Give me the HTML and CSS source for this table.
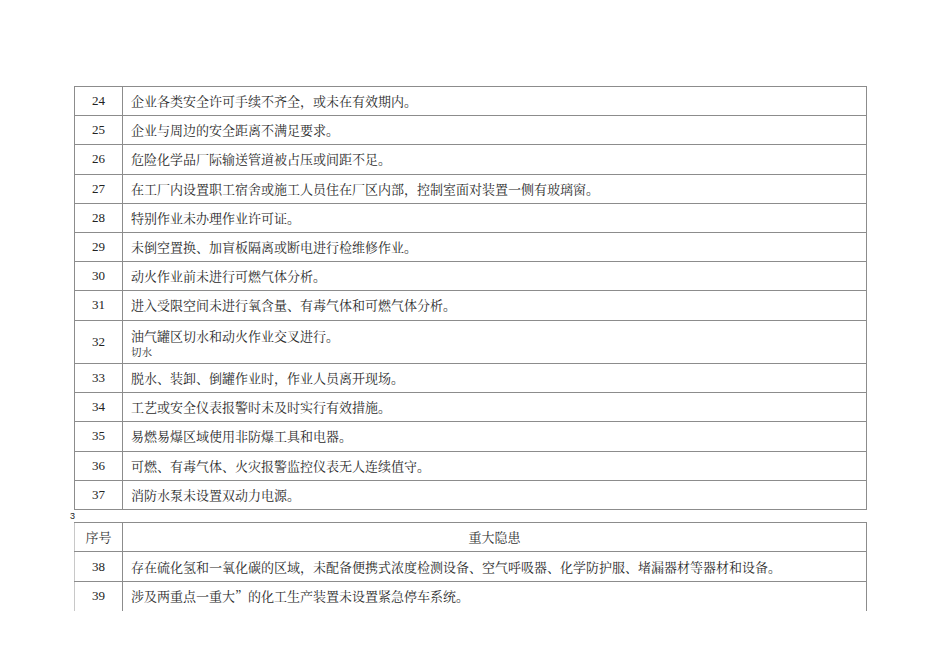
FILE: index.html
```html
<!DOCTYPE html>
<html lang="zh">
<head>
<meta charset="utf-8">
<title>重大隐患</title>
<link rel="stylesheet" href="styles.css">
</head>
<body>
<div class="page">
  <table class="grid">
    <colgroup><col class="c-no"><col class="c-text"></colgroup>
    <tr><td class="no">24</td><td class="txt">企业各类安全许可手续不齐全，或未在有效期内。</td></tr>
    <tr><td class="no">25</td><td class="txt">企业与周边的安全距离不满足要求。</td></tr>
    <tr><td class="no">26</td><td class="txt">危险化学品厂际输送管道被占压或间距不足。</td></tr>
    <tr><td class="no">27</td><td class="txt">在工厂内设置职工宿舍或施工人员住在厂区内部，控制室面对装置一侧有玻璃窗。</td></tr>
    <tr><td class="no">28</td><td class="txt">特别作业未办理作业许可证。</td></tr>
    <tr><td class="no">29</td><td class="txt">未倒空置换、加盲板隔离或断电进行检维修作业。</td></tr>
    <tr><td class="no">30</td><td class="txt">动火作业前未进行可燃气体分析。</td></tr>
    <tr><td class="no">31</td><td class="txt">进入受限空间未进行氧含量、有毒气体和可燃气体分析。</td></tr>
    <tr class="tall"><td class="no">32</td><td class="txt"><div class="main">油气罐区切水和动火作业交叉进行。</div><div class="sub">切水</div></td></tr>
    <tr><td class="no">33</td><td class="txt">脱水、装卸、倒罐作业时，作业人员离开现场。</td></tr>
    <tr><td class="no">34</td><td class="txt">工艺或安全仪表报警时未及时实行有效措施。</td></tr>
    <tr><td class="no">35</td><td class="txt">易燃易爆区域使用非防爆工具和电器。</td></tr>
    <tr><td class="no">36</td><td class="txt">可燃、有毒气体、火灾报警监控仪表无人连续值守。</td></tr>
    <tr><td class="no">37</td><td class="txt">消防水泵未设置双动力电源。</td></tr>
  </table>
  <div class="pagenum">3</div>
  <table class="grid second">
    <colgroup><col class="c-no"><col class="c-text"></colgroup>
    <tr class="head"><td class="no hd">序号</td><td class="hd center">重大隐患</td></tr>
    <tr><td class="no">38</td><td class="txt">存在硫化氢和一氧化碳的区域，未配备便携式浓度检测设备、空气呼吸器、化学防护服、堵漏器材等器材和设备。</td></tr>
    <tr class="last"><td class="no">39</td><td class="txt">涉及两重点一重大”的化工生产装置未设置紧急停车系统。</td></tr>
  </table>
</div>
</body>
</html>
```

FILE: styles.css
```css
html, body {
  margin: 0;
  padding: 0;
  background: #ffffff;
}

body {
  width: 950px;
  height: 672px;
  overflow: hidden;
  font-family: "Liberation Serif", "Noto Serif CJK SC", "Noto Sans CJK SC", serif;
  color: #222222;
}

.page {
  padding: 86px 0 0 74px;
}

.grid {
  border-collapse: collapse;
  width: 793px;
  table-layout: fixed;
}

.c-no { width: 48px; }

.grid td {
  border: 1px solid #8c8c8c;
  height: 29.2px;
  padding: 0;
  font-size: 13px;
  line-height: 16px;
  vertical-align: middle;
  box-sizing: border-box;
}

.grid td.no {
  text-align: center;
  font-family: "Liberation Serif", "Noto Sans CJK SC", serif;
}

.grid td.txt {
  padding-left: 8px;
  font-family: "Noto Serif CJK SC", "Noto Sans CJK SC", sans-serif;
  color: #2a2a2a;
}

.grid tr.tall td {
  height: 43.5px;
}

.main {
  line-height: 15px;
  padding-top: 2px;
}

.sub {
  font-size: 10.5px;
  line-height: 13px;
  margin-top: 2px;
}

.pagenum {
  height: 12px;
  margin-left: -4px;
  font-family: "Liberation Sans", sans-serif;
  font-size: 9px;
  line-height: 10px;
  padding-top: 1px;
  box-sizing: border-box;
  color: #222222;
}

.second td {
  height: 29.5px;
}

.second tr.last td {
  border-bottom: none;
}

.second td.no {
  border-left-color: #c8c8c8;
}

.grid td.hd {
  font-family: "Noto Serif CJK SC", "Noto Sans CJK SC", sans-serif;
  font-size: 13px;
  color: #333333;
}

.center {
  text-align: center;
  padding-left: 4px;
}
```
